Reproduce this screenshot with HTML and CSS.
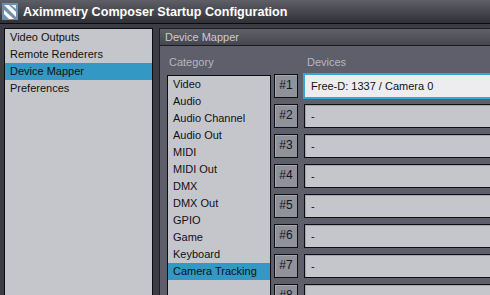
FILE: index.html
```html
<!DOCTYPE html>
<html>
<head>
<meta charset="UTF-8" />
<title>Aximmetry Composer Startup Configuration</title>
<link rel="stylesheet" href="styles.css">
</head>
<body>
<div class="window">
  <div class="titlebar">
    <svg class="logo" width="16" height="17" viewBox="0 0 16 17">
      <rect x="0" y="0" width="16" height="17" fill="#6f8fae"/>
      <polygon points="2,2 7,2 14,9 14,14 " fill="#ffffff"/>
      <polygon points="2,7 2,11 7,16 12,16" fill="#ffffff"/>
      <polygon points="9,2 14,2 14,6" fill="#e8eef4"/>
    </svg>
    <span class="title">Aximmetry Composer Startup Configuration</span>
  </div>
  <div class="main">
    <div class="nav">
      <div class="item">Video Outputs</div>
      <div class="item">Remote Renderers</div>
      <div class="item sel">Device Mapper</div>
      <div class="item">Preferences</div>
    </div>
    <div class="panel">
      <div class="panel-head">Device Mapper</div>
      <div class="panel-body">
        <div class="cat-col">
          <div class="label">Category</div>
          <div class="list">
            <div class="item">Video</div>
            <div class="item">Audio</div>
            <div class="item">Audio Channel</div>
            <div class="item">Audio Out</div>
            <div class="item">MIDI</div>
            <div class="item">MIDI Out</div>
            <div class="item">DMX</div>
            <div class="item">DMX Out</div>
            <div class="item">GPIO</div>
            <div class="item">Game</div>
            <div class="item">Keyboard</div>
            <div class="item sel">Camera Tracking</div>
          </div>
        </div>
        <div class="dev-col">
          <div class="label dev-label">Devices</div>
          <div class="row"><div class="num">#1</div><div class="field focus">Free-D: 1337 / Camera 0</div></div>
          <div class="row"><div class="num">#2</div><div class="field">-</div></div>
          <div class="row"><div class="num">#3</div><div class="field">-</div></div>
          <div class="row"><div class="num">#4</div><div class="field">-</div></div>
          <div class="row"><div class="num">#5</div><div class="field">-</div></div>
          <div class="row"><div class="num">#6</div><div class="field">-</div></div>
          <div class="row"><div class="num">#7</div><div class="field">-</div></div>
          <div class="row"><div class="num">#8</div><div class="field">-</div></div>
        </div>
      </div>
    </div>
  </div>
</div>
</body>
</html>
```

FILE: styles.css
```css
* { box-sizing: border-box; }
html, body { margin: 0; padding: 0; }
body { width: 490px; height: 295px; overflow: hidden; background: #3c3d44; font-family: "Liberation Sans", Arial, sans-serif; font-size: 11px; color: #111; }

.window { width: 490px; height: 295px; overflow: hidden; }

.titlebar { display: flex; align-items: center; height: 24px; padding-left: 2px; background: linear-gradient(#5e5f67, #303136); border-bottom: 1px solid #0c0c0e; }
.logo { display: block; margin-right: 5px; }
.title { color: #ffffff; font-weight: bold; font-size: 12.6px; }

.main { display: flex; gap: 6px; padding: 4px 0 0 4px; height: 271px; }

.nav { width: 149px; flex: none; background: #c4c6cc; border: 1px solid #0c0c0e; border-bottom: none; }
.item { height: 17px; line-height: 17px; padding-left: 5px; white-space: nowrap; }
.item.sel { background: #3398c4; }

.panel { flex: 1; margin-right: -20px; background: #5e5f6b; border: 1px solid #1e1f24; border-bottom: none; }
.panel-head { height: 17px; line-height: 16px; padding-left: 5px; color: #cbcdd4; background: linear-gradient(#5f606a, #45464e); border-bottom: 1px solid #1b1c20; }

.panel-body { display: flex; gap: 3px; padding: 9px 0 0 7px; }
.label { height: 14px; line-height: 14px; padding-left: 2px; color: #b5b7bf; margin-bottom: 6px; }
.dev-label { padding-left: 33px; margin-bottom: 5px; }

.list { width: 104px; height: 240px; background: #c4c6cc; border: 1px solid #0c0c0e; border-bottom: none; }

.dev-col { flex: 1; display: flex; flex-direction: column; }
.row { display: flex; gap: 6px; height: 24px; margin-bottom: 6px; }
.num { width: 24px; flex: none; background: #8f919b; border: 1px solid #0f0f12; box-shadow: inset 1px 1px 0 #a6a8b0; text-align: center; line-height: 21px; font-size: 12px; color: #15151a; }
.field { flex: 1; background: #c4c6cc; border: 1px solid #0f0f12; box-shadow: inset 1px 1px 0 #a3a5ad; padding-left: 6px; line-height: 22px; }
.field.focus { background: #ededef; border-color: #3aa3dc; box-shadow: 0 0 0 1px #3aa3dc; }
```
